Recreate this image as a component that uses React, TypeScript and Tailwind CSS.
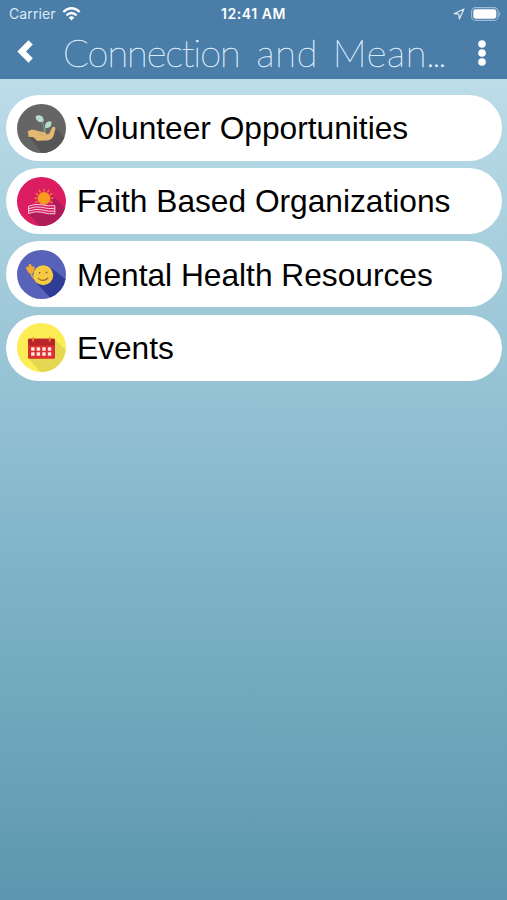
import type { ReactNode } from 'react';

type MenuItem = {
  label: string;
  icon: ReactNode;
};

function VolunteerIcon() {
  return (
    <svg className="size-[49px] shrink-0" viewBox="0 0 49 49">
      <circle cx="24.5" cy="24.5" r="24.5" fill="#666565" />
      <path d="M12 33 L25 48.9 A24.5 24.5 0 0 0 47.6 33 L37.5 23 L34 29 Z" fill="#575656" />
      <path d="M24.4 16.5 Q27.6 21.5 27.4 30 M31 20.5 Q27.8 24 27.4 29" fill="none" stroke="#87a892" strokeWidth="0.9" />
      <path d="M18.7 12.2 C22 10 27.2 11.6 26.6 17.6 C22.2 19 18.6 16.8 18.7 12.2Z" fill="#b5ddc9" />
      <path d="M34.3 17.6 C29.8 16.6 27.2 19.4 28.3 23.9 C32.8 24.6 35 22 34.3 17.6Z" fill="#b5ddc9" />
      <path d="M10.8 27.2 C13.5 25.3 17 25.1 20 26.8 L28 28.5 C30 29 29.6 31 27.8 31 L32.3 29.4 L35 23.8 C36.2 22 38.8 22.8 38.4 24.8 L36.8 31 C36 34.4 33 36.2 30 36.4 L20 36.8 L16.5 33.2 L11.6 32.7 Z" fill="#e3b873" />
      <path d="M20.5 30.8 H28" stroke="#c99c59" strokeWidth="0.6" />
    </svg>
  );
}

function FaithIcon() {
  return (
    <svg className="size-[49px] shrink-0" viewBox="0 0 49 49">
      <circle cx="24.5" cy="24.5" r="24.5" fill="#dc1d61" />
      <path d="M11.5 36.5 L22.5 48.9 A24.5 24.5 0 0 0 48 31 L34 17 L36 29 Z" fill="#b01c59" />
      <g stroke="#f3992b" strokeWidth="1.2" strokeLinecap="round">
        <path d="M27 12.3 V14 M22.4 13.4 L23.2 15 M31.6 13.4 L30.8 15 M19.2 16.7 L20.7 17.7 M34.8 16.7 L33.3 17.7 M18 21.2 H19.5 M36 21.2 H34.5 M19 25.4 L20.5 24.7 M35.1 25.4 L33.6 24.7" />
      </g>
      <circle cx="27" cy="21.4" r="6.3" fill="#f99b1e" />
      <path d="M11.3 29 Q18 26 24.7 27.4 Q31.5 29.2 38 28 V37 Q31.5 37.8 24.7 35.5 Q18 34 11.3 36.6Z" fill="#d51f60" />
      <path d="M11.6 29.2 Q18 26.4 24.7 27.8 Q31.5 29.6 37.8 28.6 V36.8 Q31.5 37.4 24.7 35.2 Q18 33.8 11.6 36.5Z M11.6 31.7 Q18 28.9 24.7 30.3 Q31.5 32.2 37.8 31.4 M11.6 34.1 Q18 31.4 24.7 32.8 Q31.5 34.9 37.8 34.1" fill="none" stroke="#fbd6e2" strokeWidth="0.95" />
    </svg>
  );
}

function MentalHealthIcon() {
  return (
    <svg className="size-[49px] shrink-0" viewBox="0 0 49 49">
      <circle cx="24.5" cy="24.5" r="24.5" fill="#5962b9" />
      <path d="M19 32.5 L33 47.5 A24.5 24.5 0 0 0 48.6 29 L34 18Z" fill="#303d96" />
      <path d="M14.6 22 Q13.5 26 17.5 29" fill="none" stroke="#e8ad42" strokeWidth="1.3" />
      <path d="M8.6 17.6 L11.7 16.2 L12 14 L14 14.2 L15 16.4 L17.4 16.6 L17.3 20.4 L15.3 24 L12.5 23.8 L10.4 21 Z" fill="#f3a936" />
      <circle cx="26.2" cy="25.3" r="10" fill="#f5cb44" />
      <circle cx="22.6" cy="22.8" r="0.9" fill="#8d6428" />
      <circle cx="29.5" cy="22.4" r="0.9" fill="#8d6428" />
      <path d="M21.2 28.3 Q26.2 32.6 31 28" fill="none" stroke="#946626" strokeWidth="1.1" strokeLinecap="round" />
    </svg>
  );
}

function EventsIcon() {
  return (
    <svg className="size-[49px] shrink-0" viewBox="0 0 49 49">
      <circle cx="24.5" cy="24.5" r="24.5" fill="#fced55" />
      <path d="M11.5 35.5 L23.5 48.9 A24.5 24.5 0 0 0 48.7 27 L38 17Z" fill="#e6d752" />
      <rect x="11" y="15.8" width="27" height="19.9" rx="1.2" fill="#dc302f" />
      <path d="M11 22.5 V17 Q11 15.8 12.2 15.8 H36.8 Q38 15.8 38 17 V22.5Z" fill="#b9252b" />
      <path d="M16.2 14.4 V18 M32.7 14.4 V18" stroke="#ee9337" strokeWidth="1.5" strokeLinecap="round" />
      <g fill="#fbe5e2">
        {[24.3, 29.3].map((y) =>
          [14.1, 19.6, 25.2, 30.8].map((x) => <rect key={`${x}-${y}`} x={x} y={y} width="3.5" height="3.5" rx="0.5" />),
        )}
      </g>
    </svg>
  );
}

const menuItems: MenuItem[] = [
  { label: 'Volunteer Opportunities', icon: <VolunteerIcon /> },
  { label: 'Faith Based Organizations', icon: <FaithIcon /> },
  { label: 'Mental Health Resources', icon: <MentalHealthIcon /> },
  { label: 'Events', icon: <EventsIcon /> },
];

function StatusBar() {
  return (
    <div className="grid h-7 grid-cols-3 items-center pr-[6px] pl-[9px] font-['Inter',sans-serif] text-sm text-white">
      <div className="flex items-center gap-[6px]">
        <span className="tracking-[0.1px] text-[#dceaf5]">Carrier</span>
        <svg className="h-[14px] w-[19px]" viewBox="0 0 18 14" fill="none" stroke="white" strokeWidth="2.3">
          <path d="M0.8 5 Q9 -2.4 17.2 5" />
          <path d="M3.9 8.3 Q9 3.8 14.1 8.3" />
          <path d="M6.2 10.5 Q9 8.2 11.8 10.5 L9 13.6Z" fill="white" stroke="none" />
        </svg>
      </div>
      <span className="pr-[3px] text-center font-semibold tracking-[0.55px]">12:41 AM</span>
      <div className="flex items-center justify-end gap-[6px]">
        <svg className="size-3" viewBox="0 0 12 12" fill="none" stroke="#dceaf5" strokeWidth="1.2" strokeLinejoin="round">
          <path d="M11 1 L1 5.7 L5.8 6.1 L6.4 11 Z" />
        </svg>
        <svg className="h-[14px] w-[30px]" viewBox="0 0 30 14">
          <rect x="0.6" y="0.6" width="26.4" height="12.8" rx="4" fill="none" stroke="#9dbdd8" strokeWidth="1.1" />
          <rect x="2.3" y="2.3" width="23" height="9.4" rx="2.4" fill="white" />
          <path d="M28.2 4.8 Q30.6 7 28.2 9.2Z" fill="#9dbdd8" />
        </svg>
      </div>
    </div>
  );
}

export default function App() {
  return (
    <div className="flex h-[900px] w-full flex-col overflow-hidden bg-linear-to-b from-[#bcdce8] from-9% via-[#82b6ca] via-60% to-[#5c97af]">
      <header className="h-[79px] shrink-0 bg-[#4a7da8]">
        <StatusBar />
        <div className="flex h-[51px] items-center">
          <button type="button" aria-label="Back" className="flex w-[63px] shrink-0 pb-[5px] pl-[17px]">
            <svg className="h-[23px] w-4" viewBox="0 0 16 23">
              <path d="M11.5 0.3 L15.8 4.6 L9 11.6 L15.8 18.3 L11.5 22.7 L0.3 11.6Z" fill="white" />
            </svg>
          </button>
          <h1 className="w-[390px] shrink-0 pb-1 font-['Lato',sans-serif] text-[38px] leading-[50px] font-thin whitespace-nowrap text-[#e4f1fb] [-webkit-text-stroke:0.5px_#d8eafa]">
            <span className="tracking-[-1.05px]">Connection </span>
            <span className="ml-[7px] tracking-[0.8px]">and </span>
            <span className="ml-[3px] tracking-[0.7px]">Mean</span>
            <span className="-ml-px tracking-[-2.8px]">...</span>
          </h1>
          <button type="button" aria-label="More" className="flex pb-[2px] pl-6">
            <svg className="h-[26px] w-[10px]" viewBox="0 0 10 26" fill="white">
              <circle cx="5" cy="4" r="3.8" />
              <circle cx="5" cy="13" r="3.8" />
              <circle cx="5" cy="22" r="3.8" />
            </svg>
          </button>
        </div>
      </header>
      <main className="flex flex-col gap-[7.2px] pt-4 pr-[5px] pl-[6px]">
        {menuItems.map((item) => (
          <button key={item.label} type="button" className="flex h-[66px] items-center gap-[11px] rounded-full bg-white pl-[11px] text-left">
            {item.icon}
            <span className="pt-[2px] font-['Liberation_Sans',Arial,sans-serif] text-[31.7px] leading-none whitespace-nowrap text-black">{item.label}</span>
          </button>
        ))}
      </main>
    </div>
  );
}
